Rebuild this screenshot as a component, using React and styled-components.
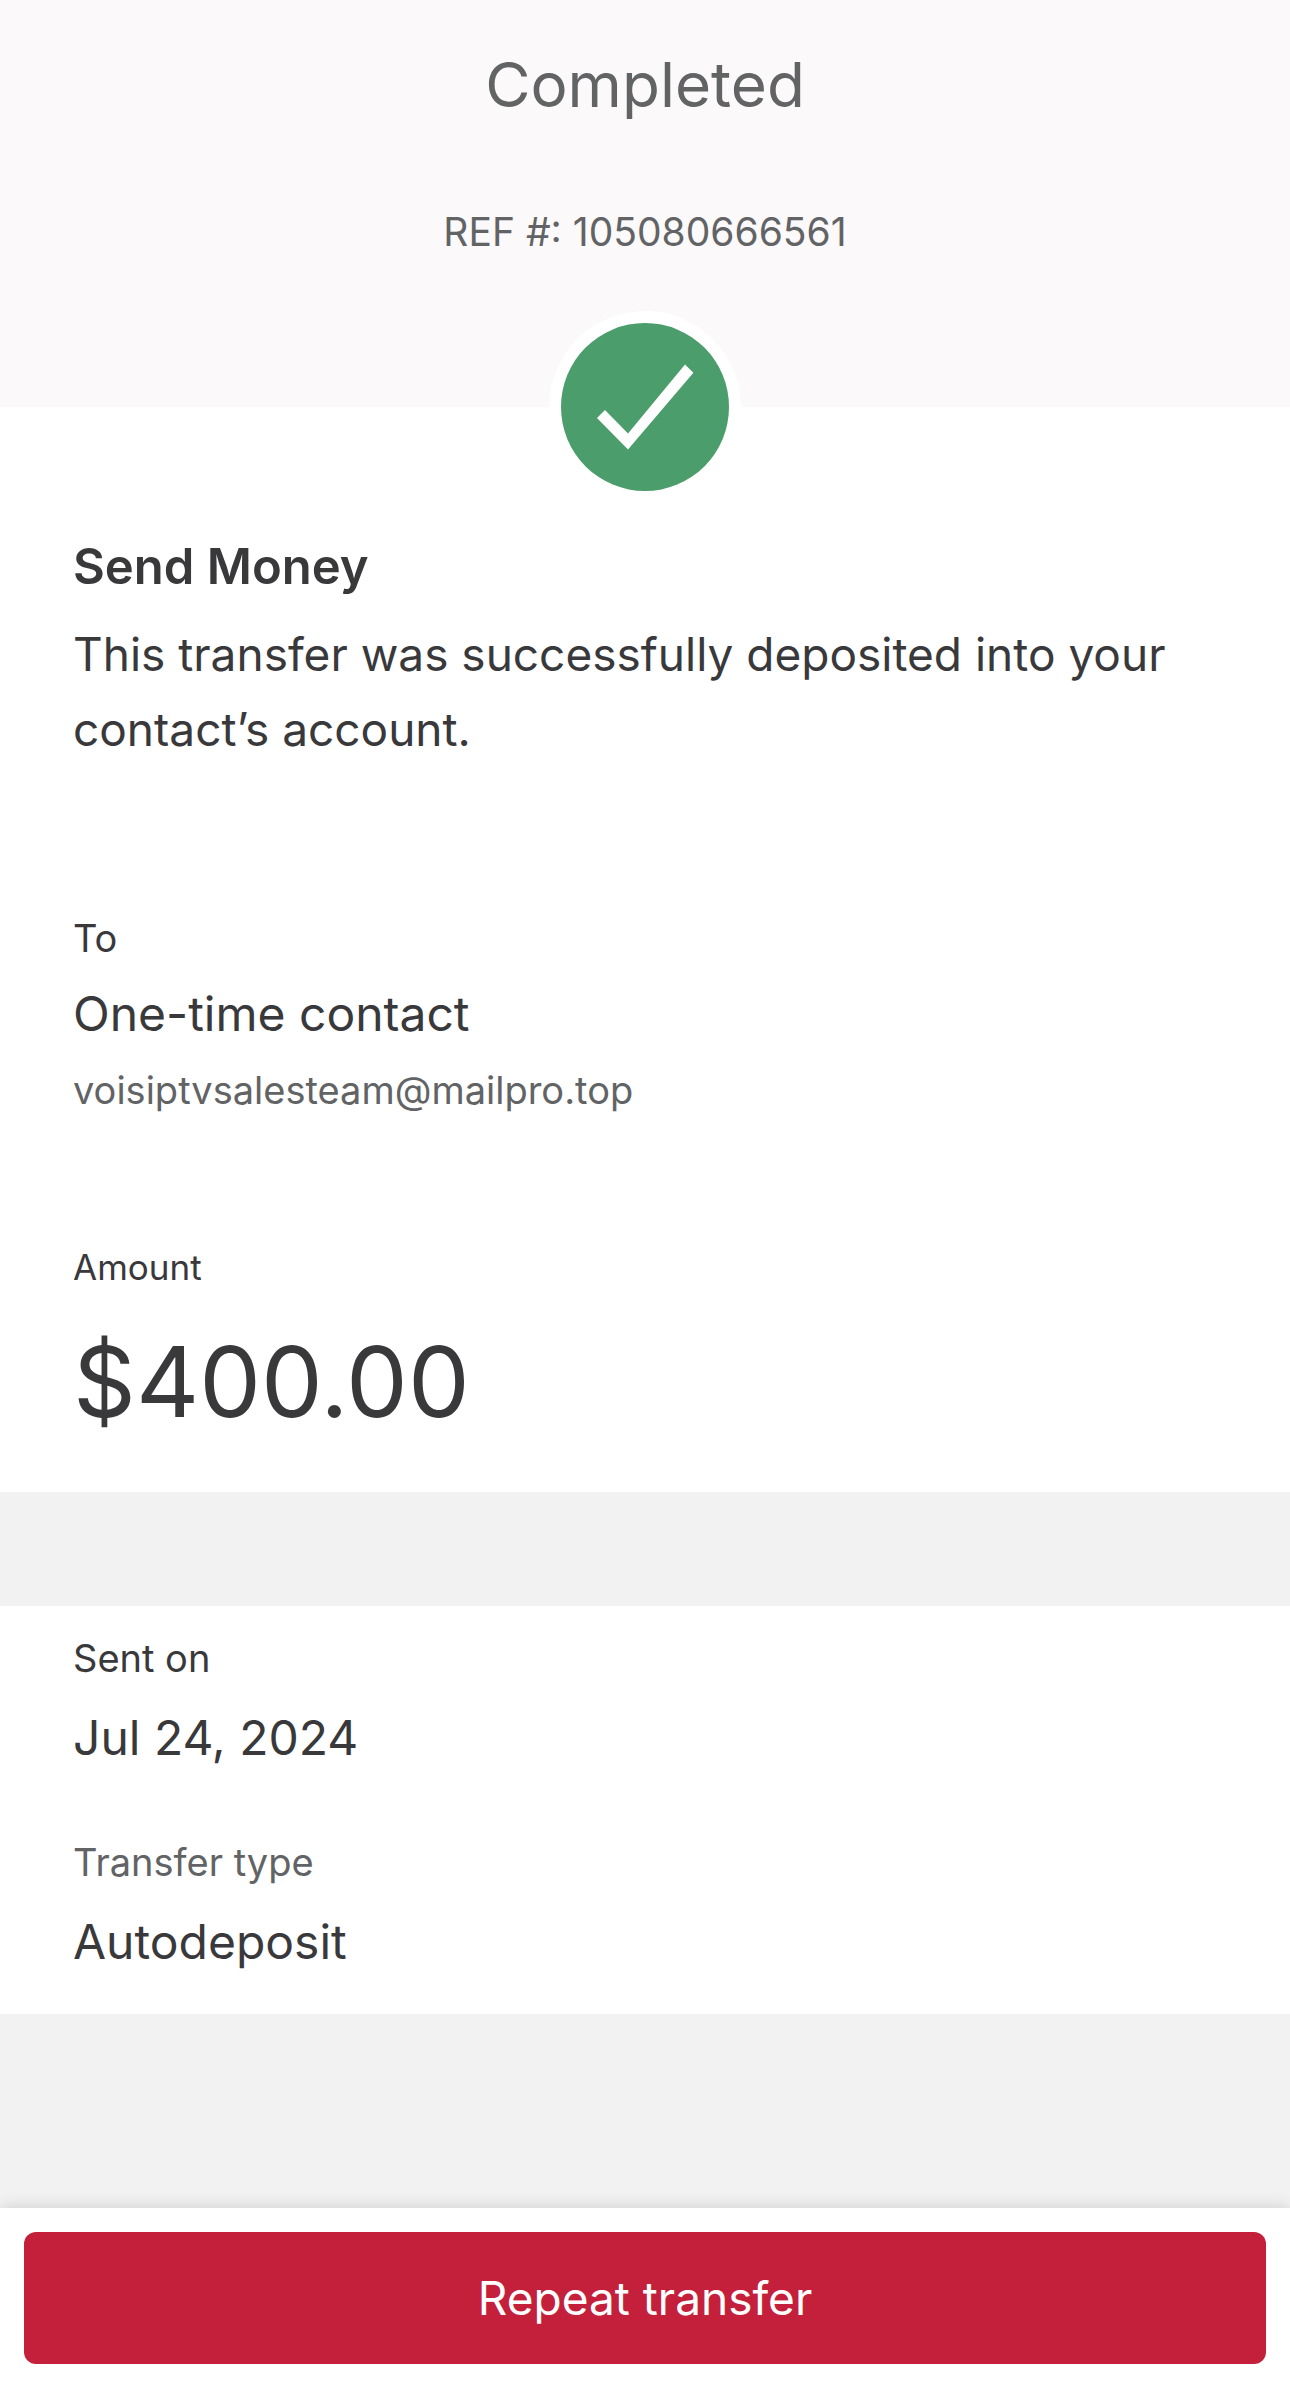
import React from 'react';
import styled, { createGlobalStyle, ThemeProvider } from 'styled-components';

const theme = {
  text: '#39393c',
  muted: '#626365',
  header: '#fbf9fa',
  band: '#f2f2f2',
  success: '#4b9d6b',
  primary: '#c41f3b',
};

const GlobalStyle = createGlobalStyle`
  * {
    box-sizing: border-box;
  }
  body {
    margin: 0;
    font-family: Inter, 'Liberation Sans', sans-serif;
    -webkit-font-smoothing: antialiased;
  }
  h1, h2, p, dl, dt, dd {
    margin: 0;
    font-weight: 400;
  }
`;

const Page = styled.div`
  min-height: 100vh;
  display: flex;
  flex-direction: column;
  background: ${(props) => props.theme.band};
  color: ${(props) => props.theme.text};
`;

const Header = styled.header`
  display: flex;
  flex-direction: column;
  align-items: center;
  gap: 83px;
  padding: 45px 24px 151px;
  background: ${(props) => props.theme.header};
  color: ${(props) => props.theme.muted};
`;

const Status = styled.h1`
  font-size: 62px;
  line-height: 80px;
`;

const Reference = styled.p`
  font-size: 39px;
  line-height: 48px;
`;

const Section = styled.section`
  padding: ${(props) => (props.$first ? '0 73px 50px' : '28px 73px 42px')};
  background: #fff;
`;

const Badge = styled.svg`
  display: block;
  width: 192px;
  height: 192px;
  margin: -96px auto 34px;
`;

const Title = styled.h2`
  margin-bottom: 20px;
  font-size: 49px;
  font-weight: 600;
  line-height: 60px;
`;

const Message = styled.p`
  font-size: 46px;
  line-height: 75px;
`;

const Details = styled.dl`
  display: flex;
  flex-direction: column;
  gap: ${(props) => props.$gap}px;
  margin-top: ${(props) => (props.$spaced ? '147px' : '0')};
`;

const Field = styled.div`
  display: flex;
  flex-direction: column;
  gap: ${(props) => props.$gap}px;
`;

const Label = styled.dt`
  font-size: ${(props) => (props.$small ? '35px' : '38px')};
  line-height: 48px;
  color: ${(props) => (props.$muted ? props.theme.muted : 'inherit')};
`;

const Value = styled.dd`
  font-size: 48px;
  line-height: 60px;
`;

const Email = styled.dd`
  font-size: 38px;
  line-height: 48px;
  color: ${(props) => props.theme.muted};
`;

const Amount = styled.dd`
  font-size: 98px;
  line-height: 120px;
`;

const Band = styled.div`
  height: 114px;
`;

const Footer = styled.footer`
  margin-top: auto;
  padding: 24px 24px 27px;
  background: #fff;
  box-shadow: 0 0 16px rgba(0, 0, 0, 0.16);
`;

const RepeatButton = styled.button`
  display: block;
  width: 100%;
  height: 132px;
  padding: 0;
  border: 0;
  border-radius: 12px;
  background: ${(props) => props.theme.primary};
  color: #fff;
  font-family: inherit;
  font-size: 46px;
  line-height: 60px;
  cursor: pointer;
`;

const App = () => {
  return (
    <ThemeProvider theme={theme}>
      <GlobalStyle />
      <Page>
        <Header>
          <Status>Completed</Status>
          <Reference>REF #: 105080666561</Reference>
        </Header>
        <Section $first>
          <Badge viewBox="0 0 192 192" aria-hidden="true">
            <circle cx="96" cy="96" r="96" fill="#fff" />
            <circle cx="96" cy="96" r="84" fill={theme.success} />
            <path d="M48 107 L56 99 L79 122.6 L136 53.6 L144.4 61.7 L79 138.4 Z" fill="#fff" />
          </Badge>
          <Title>Send Money</Title>
          <Message>
            This transfer was successfully deposited into your contact’s account.
          </Message>
          <Details $gap={129} $spaced>
            <Field $gap={22}>
              <Label>To</Label>
              <Value>One-time contact</Value>
              <Email>voisiptvsalesteam@mailpro.top</Email>
            </Field>
            <Field $gap={31}>
              <Label $small>Amount</Label>
              <Amount>$400.00</Amount>
            </Field>
          </Details>
        </Section>
        <Band />
        <Section>
          <Details $gap={70}>
            <Field $gap={26}>
              <Label>Sent on</Label>
              <Value>Jul 24, 2024</Value>
            </Field>
            <Field $gap={26}>
              <Label $muted>Transfer type</Label>
              <Value>Autodeposit</Value>
            </Field>
          </Details>
        </Section>
        <Footer>
          <RepeatButton type="button">Repeat transfer</RepeatButton>
        </Footer>
      </Page>
    </ThemeProvider>
  );
};

export default App;
